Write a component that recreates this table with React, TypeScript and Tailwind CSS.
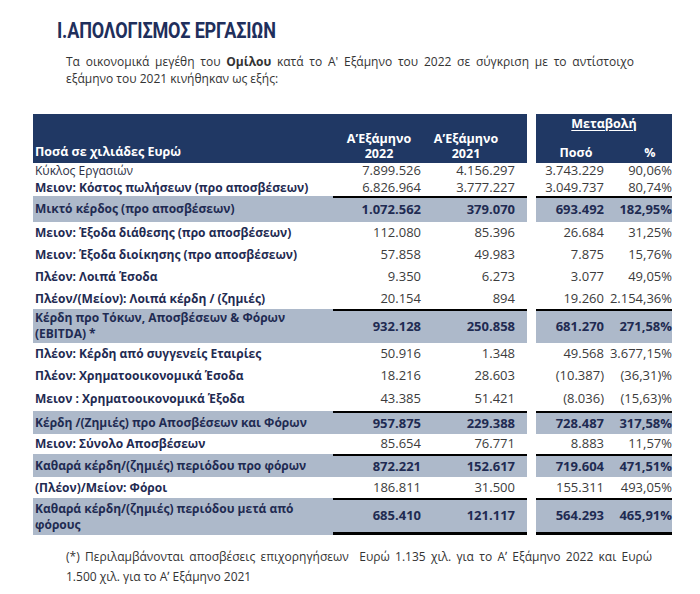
import React from "react";

type Row = {
  label: React.ReactNode;
  v: [string, string, string, string];
  h: number;
  kind: "plain" | "bold" | "total";
  last?: boolean;
};

const rows: Row[] = [
  { label: "Κύκλος Εργασιών", v: ["7.899.526", "4.156.297", "3.743.229", "90,06%"], h: 16, kind: "plain" },
  { label: "Μειον: Κόστος πωλήσεων (προ αποσβέσεων)", v: ["6.826.964", "3.777.227", "3.049.737", "80,74%"], h: 17, kind: "bold" },
  { label: "Μικτό κέρδος (προ αποσβέσεων)", v: ["1.072.562", "379.070", "693.492", "182,95%"], h: 26, kind: "total" },
  { label: "Μειον: Έξοδα διάθεσης (προ αποσβέσεων)", v: ["112.080", "85.396", "26.684", "31,25%"], h: 22, kind: "bold" },
  { label: "Μειον: Έξοδα διοίκησης (προ αποσβέσεων)", v: ["57.858", "49.983", "7.875", "15,76%"], h: 22, kind: "bold" },
  { label: "Πλέον: Λοιπά Έσοδα", v: ["9.350", "6.273", "3.077", "49,05%"], h: 22, kind: "bold" },
  { label: "Πλέον/(Μείον): Λοιπά κέρδη / (ζημιές)", v: ["20.154", "894", "19.260", "2.154,36%"], h: 21, kind: "bold" },
  {
    label: (
      <>
        Κέρδη προ Τόκων, Αποσβέσεων &amp; Φόρων
        <br />
        (EBITDA) *
      </>
    ),
    v: ["932.128", "250.858", "681.270", "271,58%"],
    h: 34,
    kind: "total",
  },
  { label: "Πλέον: Κέρδη από συγγενείς Εταιρίες", v: ["50.916", "1.348", "49.568", "3.677,15%"], h: 22, kind: "bold" },
  { label: "Πλέον: Χρηματοοικονομικά Έσοδα", v: ["18.216", "28.603", "(10.387)", "(36,31)%"], h: 22, kind: "bold" },
  { label: "Μειον : Χρηματοοικονομικά Έξοδα", v: ["43.385", "51.421", "(8.036)", "(15,63)%"], h: 24, kind: "bold" },
  { label: "Κέρδη /(Ζημιές) προ Αποσβέσεων και Φόρων", v: ["957.875", "229.388", "728.487", "317,58%"], h: 23, kind: "total" },
  { label: "Μειον: Σύνολο Αποσβέσεων", v: ["85.654", "76.771", "8.883", "11,57%"], h: 20, kind: "bold" },
  { label: "Καθαρά κέρδη/(ζημιές) περιόδου προ φόρων", v: ["872.221", "152.617", "719.604", "471,51%"], h: 23, kind: "total" },
  { label: "(Πλέον)/Μείον: Φόροι", v: ["186.811", "31.500", "155.311", "493,05%"], h: 21, kind: "bold" },
  {
    label: (
      <>
        Καθαρά κέρδη/(ζημιές) περιόδου μετά από
        <br />
        φόρους
      </>
    ),
    v: ["685.410", "121.117", "564.293", "465,91%"],
    h: 37,
    kind: "total",
    last: true,
  },
];

function DataRow({ r }: { r: Row }) {
  const total = r.kind === "total";
  const bg = total ? "bg-[#adb9ca]" : "bg-white";
  const labelCls =
    r.kind === "plain"
      ? "font-normal text-[#2b2f45]"
      : "font-bold text-[#1f2b52]";
  const numCls = total ? "font-bold text-[#1f2b52]" : "font-normal text-[#3c3c3c]";
  const numBorder = `${total ? "border-t-2 border-t-black" : ""} ${r.last ? "border-b-[3px] border-b-black" : ""}`;
  return (
    <div className="flex" style={{ height: r.h }}>
      <div className={`w-[300px] ${bg} ${labelCls} pl-[2px] flex items-center text-[12px] leading-[16px]`}>
        <span>{r.label}</span>
      </div>
      <div className={`w-[92px] ${bg} ${numBorder} ${numCls} flex items-center justify-end pr-[4px] text-[13px]`}>
        {r.v[0]}
      </div>
      <div className={`w-[102px] ${bg} ${numBorder} ${numCls} flex items-center justify-end pr-[12px] text-[13px]`}>
        {r.v[1]}
      </div>
      <div className="w-[9px] bg-white" />
      <div className={`w-[74px] ${bg} ${numBorder} ${numCls} flex items-center justify-end pr-[6px] text-[13px]`}>
        {r.v[2]}
      </div>
      <div className={`w-[62px] ${bg} ${numBorder} ${numCls} flex items-center justify-end text-[13px]`}>
        {r.v[3]}
      </div>
    </div>
  );
}

export default function App() {
  return (
    <div className="w-[700px] h-[594px] bg-white overflow-hidden font-['Open_Sans','Noto_Sans',sans-serif]">
      <div className="pt-[19px] pl-[57px] h-[43px]">
        <h1 className="inline-block origin-left scale-x-[0.82] text-[22px] leading-[24px] font-bold text-[#1f2f5c] font-['Roboto','Open_Sans',sans-serif] tracking-[-0.2px] whitespace-nowrap">
          I.ΑΠΟΛΟΓΙΣΜΟΣ ΕΡΓΑΣΙΩΝ
        </h1>
      </div>
      <div className="ml-[66px] w-[568px] mt-[10px] text-[12px] leading-[17px] text-[#333]">
        <p className="text-justify [text-align-last:justify] whitespace-nowrap">
          Τα οικονομικά μεγέθη του <b>Ομίλου</b> κατά το Α' Εξάμηνο του 2022 σε σύγκριση με το αντίστοιχο
        </p>
        <p>εξάμηνο του 2021 κινήθηκαν ως εξής:</p>
      </div>

      <div className="ml-[33px] mt-[27px] w-[639px]">
        {/* header */}
        <div className="flex h-[49px] text-white font-bold">
          <div className="w-[494px] bg-[#203864] flex">
            <div className="w-[300px] flex items-end pl-[2px] pb-[1px] text-[12.5px]">Ποσά σε χιλιάδες Ευρώ</div>
            <div className="w-[92px] flex flex-col items-center justify-end pb-[2px] text-[12.5px] leading-[15px]">
              <span>ΑʹΕξάμηνο</span>
              <span>2022</span>
            </div>
            <div className="w-[102px] flex flex-col items-center justify-end pb-[2px] pr-[20px] text-[12.5px] leading-[15px]">
              <span>ΑʹΕξάμηνο</span>
              <span>2021</span>
            </div>
          </div>
          <div className="w-[9px]" />
          <div className="w-[136px] bg-[#203864] flex flex-col text-[12.5px]">
            <div className="text-center underline underline-offset-2 pt-[2px] leading-[16px]">Μεταβολή</div>
            <div className="flex mt-[12px]">
              <div className="w-[74px] text-center pl-[6px]">Ποσό</div>
              <div className="w-[62px] text-center pl-[18px]">%</div>
            </div>
          </div>
        </div>
        {rows.map((r, i) => (
          <DataRow key={i} r={r} />
        ))}
      </div>

      <div className="ml-[66px] w-[586px] mt-[12px] text-[12px] leading-[20px] text-[#333]">
        <p className="text-justify [text-align-last:justify]">
          (*) Περιλαμβάνονται αποσβέσεις επιχορηγήσεων&nbsp; Ευρώ 1.135 χιλ. για το Αʹ Εξάμηνο 2022 και Ευρώ
        </p>
        <p>1.500 χιλ. για το Αʹ Εξάμηνο 2021</p>
      </div>
    </div>
  );
}
